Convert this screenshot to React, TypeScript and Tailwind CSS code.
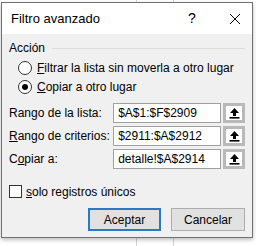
import React from 'react';

const font = { fontFamily: '"Segoe UI", "Liberation Sans", Arial, sans-serif' };

const UploadIcon = () => (
  <svg width="11" height="12" viewBox="0 0 11 12">
    <path d="M5.5 1 L10 6 L7 6 L7 9 L4 9 L4 6 L1 6 Z" fill="#000" />
    <rect x="0.5" y="10" width="10" height="1.6" fill="#000" />
  </svg>
);

const RangeRow = ({ label, value }: { label: React.ReactNode; value: string }) => (
  <div className="flex h-[20px] items-center">
    <div className="w-[106px] whitespace-nowrap text-[12px]">{label}</div>
    <div className="flex h-[20px] w-[110px] items-center whitespace-nowrap border border-[#a0a0a0] bg-white pl-[4px] text-[12px]">
      {value}
    </div>
    <button className="ml-[2px] flex h-[20px] w-[22px] items-center justify-center border-[3px] border-[#b9b9b9] bg-white">
      <UploadIcon />
    </button>
  </div>
);

export default function App() {
  return (
    <div
      className="h-[246px] w-[256px] overflow-hidden bg-white bg-[linear-gradient(90deg,transparent_136px,#d4d4d4_136px,#d4d4d4_137px,transparent_137px,transparent_173px,#d4d4d4_173px,#d4d4d4_174px,transparent_174px)] pl-[1px] pt-[2px] text-black"
      style={font}
    >
      <div className="flex h-[236px] w-[252px] flex-col border border-[#707070] bg-[#f0f0f0] shadow-[0_2px_4px_rgba(0,0,0,0.25)]">
        <div className="flex h-[31px] items-center bg-white pl-[9px]">
          <span className="text-[13px]">Filtro avanzado</span>
          <span className="ml-auto w-[20px] text-center text-[14px]">?</span>
          <span className="ml-[26px] mr-[10px] flex w-[14px] justify-center">
            <svg width="12" height="12" viewBox="0 0 12 12">
              <path d="M1 1 L11 11 M11 1 L1 11" stroke="#000" strokeWidth="1" />
            </svg>
          </span>
        </div>

        <div className="flex flex-1 flex-col whitespace-nowrap px-[7px] pt-[6px] text-[12px]">
          <div className="flex h-[16px] items-center">
            <span>Acción</span>
            <div className="ml-[7px] h-px flex-1 bg-[#dcdcdc]" />
          </div>

          <div className="mt-[2px] flex h-[19px] items-center pl-[9px]">
            <span className="h-[14px] w-[14px] rounded-full border border-[#333] bg-white" />
            <span className="ml-[5px]">
              <u>F</u>iltrar la lista sin moverla a otro lugar
            </span>
          </div>
          <div className="flex h-[19px] items-center pl-[9px]">
            <span className="flex h-[14px] w-[14px] items-center justify-center rounded-full border border-[#333] bg-white">
              <span className="h-[6px] w-[6px] rounded-full bg-black" />
            </span>
            <span className="ml-[5px]">
              <u>C</u>opiar a otro lugar
            </span>
          </div>

          <div className="mt-[7px] flex flex-col gap-[3px]">
            <RangeRow
              label={
                <>
                  Ran<u>g</u>o de la lista:
                </>
              }
              value="$A$1:$F$2909"
            />
            <RangeRow
              label={
                <>
                  <u>R</u>ango de criterios:
                </>
              }
              value="$2911:$A$2912"
            />
            <RangeRow
              label={
                <>
                  C<u>o</u>piar a:
                </>
              }
              value="detalle!$A$2914"
            />
          </div>

          <div className="mt-[15px] flex h-[15px] items-center">
            <span className="h-[13px] w-[13px] border border-[#333] bg-white" />
            <span className="ml-[4px]">
              <u>s</u>olo registros únicos
            </span>
          </div>

          <div className="mt-[9px] flex justify-end gap-[10px]">
            <button className="h-[23px] w-[73px] border-2 border-[#2b79c2] bg-[#e1e1e1] text-[12px]">
              Aceptar
            </button>
            <button className="h-[23px] w-[74px] border border-[#adadad] bg-[#e1e1e1] text-[12px]">
              Cancelar
            </button>
          </div>
        </div>
      </div>
    </div>
  );
}
